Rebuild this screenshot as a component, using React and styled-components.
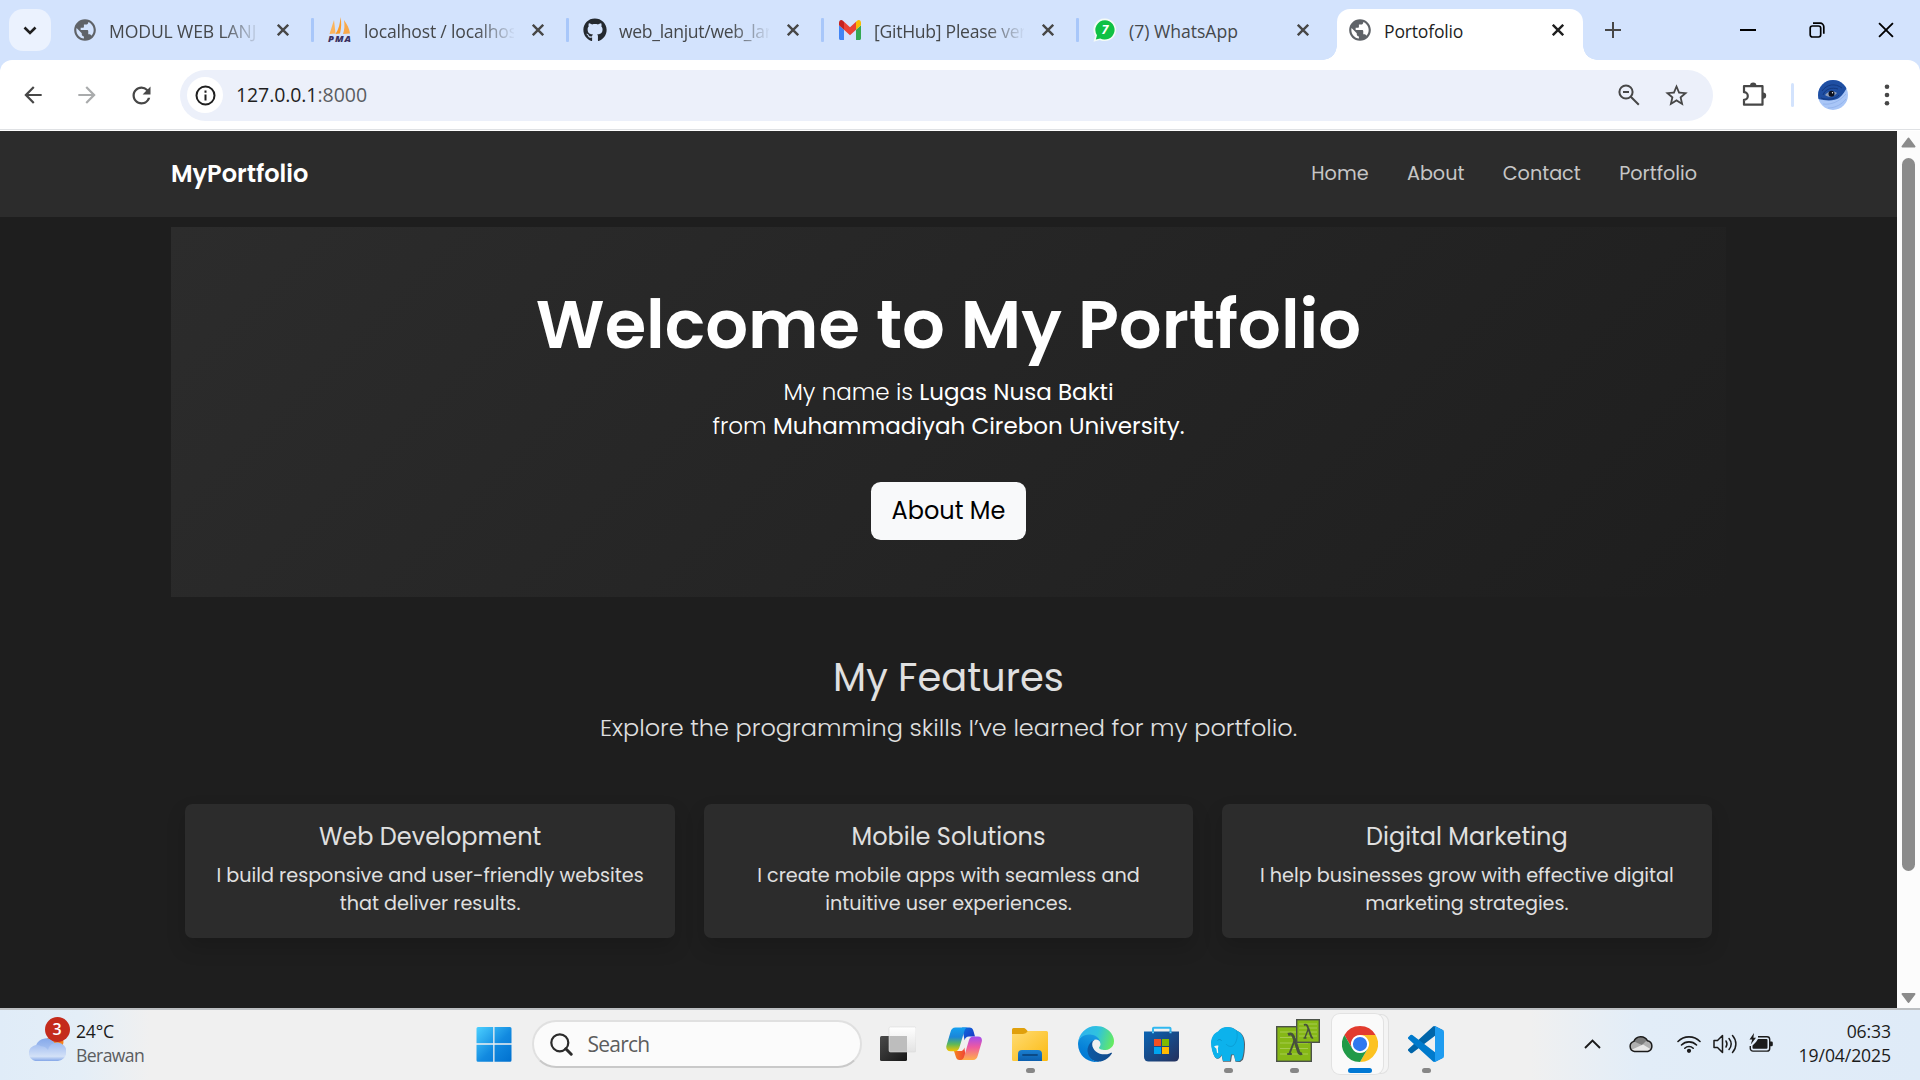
import React from "react";
import styled, { createGlobalStyle, css } from "styled-components";
import { MdPublic, MdArrowBack, MdArrowForward, MdRefresh, MdStarBorder } from "react-icons/md";
import { FaGithub } from "react-icons/fa";

const geometric = `Poppins, Inter, "Open Sans", sans-serif`;
const system = `"Segoe UI", "Open Sans", "Noto Sans", sans-serif`;

const GlobalStyle = createGlobalStyle`
  *, *::before, *::after { box-sizing: border-box; }
  html, body { margin: 0; padding: 0; }
  body { width: 1920px; height: 1080px; overflow: hidden; background: #fff; font-family: ${system}; }
  #root { height: 1080px; }
  svg { display: block; flex: none; }
  h1, h2, h3, p { margin: 0; font-weight: inherit; }
`;

const Screen = styled.div`
  display: flex;
  flex-direction: column;
  width: 1920px;
  height: 1080px;
`;

/* ---------- Tab strip ---------- */

const TabStrip = styled.div`
  display: flex;
  height: 60px;
  background: #d3e3fd;
  flex: none;
`;

const TabSearch = styled.div`
  display: flex;
  align-items: center;
  justify-content: center;
  width: 42px;
  height: 42px;
  margin: 9px 8px 0 9px;
  border-radius: 14px;
  background: #ebf2fe;
`;

const Tab = styled.div`
  display: flex;
  align-items: center;
  width: 255px;
  height: 60px;
  padding: 0 0 0 15px;
  flex: none;
  color: #45484b;

  ${(p) =>
    p.$active &&
    css`
      position: relative;
      width: 246px;
      height: 51px;
      margin: 9px 0 0 3px;
      padding: 0 0 9px 12px;
      border-radius: 13px 13px 0 0;
      background: #fff;
      color: #1f1f1f;

      &::before,
      &::after {
        content: "";
        position: absolute;
        bottom: 0;
        width: 14px;
        height: 14px;
      }
      &::before {
        left: -14px;
        background: radial-gradient(circle at 0 0, transparent 13.5px, #fff 14px);
      }
      &::after {
        right: -14px;
        background: radial-gradient(circle at 100% 0, transparent 13.5px, #fff 14px);
      }
    `}
`;

const Favicon = styled.div`
  display: flex;
  align-items: center;
  justify-content: center;
  width: 24px;
  height: 24px;
  margin-left: -1px;
`;

const TabTitle = styled.div`
  width: 150px;
  margin: 2px 0 0 12px;
  white-space: nowrap;
  font-size: 17.6px;
  line-height: 24px;
  letter-spacing: ${(p) => p.$track}px;
  ${(p) => p.$fade && css`mask-image: linear-gradient(90deg, #000 112px, transparent 152px);`}
`;

const TabClose = styled.div`
  display: flex;
  margin-left: 18px;
`;

const TabDivider = styled.div`
  width: 3px;
  height: 24px;
  margin-left: auto;
  background: #a8c7fa;
  border-radius: 1px;
`;

const NewTab = styled.div`
  display: flex;
  align-items: center;
  justify-content: center;
  width: 60px;
`;

const WindowControls = styled.div`
  display: flex;
  margin-left: auto;
`;

const WindowButton = styled.div`
  display: flex;
  align-items: center;
  justify-content: center;
  width: 69px;
  height: 59px;
`;

/* ---------- Toolbar ---------- */

const ToolbarBack = styled.div`
  background: #d3e3fd;
  flex: none;
`;

const Toolbar = styled.div`
  display: flex;
  align-items: center;
  height: 70px;
  padding: 1px 0 0 6px;
  background: #fff;
  border-bottom: 1px solid #dfe1e4;
  border-radius: 12px 12px 0 0;
`;

const ToolbarEdge = styled.div`
  height: 1px;
  background: #fff;
`;

const NavButton = styled.div`
  display: flex;
  align-items: center;
  justify-content: center;
  width: 54px;
  color: ${(p) => (p.$off ? "#a9abac" : "#474747")};
`;

const AddressBar = styled.div`
  display: flex;
  align-items: center;
  width: 1533px;
  height: 51px;
  margin-left: 12px;
  padding: 0 23px 0 7px;
  border-radius: 26px;
  background: #ecf0fa;
`;

const SiteInfo = styled.div`
  display: flex;
  align-items: center;
  justify-content: center;
  width: 36px;
  height: 36px;
  border-radius: 50%;
  background: #fff;
`;

const Url = styled.div`
  margin-left: 13px;
  font-size: 19.5px;
  line-height: 30px;
  letter-spacing: -0.1px;
  color: #1f1f1f;
  white-space: nowrap;
`;

const Port = styled.span`
  color: #5a5d61;
  letter-spacing: 0;
`;

const AddressActions = styled.div`
  display: flex;
  align-items: center;
  gap: 23px;
  margin-left: auto;
  color: #474747;
`;

const Extensions = styled.div`
  display: flex;
  justify-content: center;
  width: 74px;
  margin-left: 4px;
`;

const ToolbarDivider = styled.div`
  width: 3px;
  height: 24px;
  border-radius: 2px;
  background: #d3e3fd;
`;

const Profile = styled.div`
  margin-left: 24px;
`;

const MenuDots = styled.div`
  margin-left: 36px;
`;

/* ---------- Page ---------- */

const Viewport = styled.div`
  display: flex;
  height: 877px;
  flex: none;
`;

const Page = styled.div`
  width: 1897px;
  background: #1e1e1e;
  font-family: ${geometric};
  color: #e0e0e0;
`;

const Navbar = styled.div`
  display: flex;
  align-items: center;
  justify-content: space-between;
  height: 86.4px;
  padding: 0 200px 1px 171px;
  background: #2c2c2c;
`;

const Brand = styled.div`
  font-size: 24px;
  font-weight: 600;
  line-height: 36px;
  color: #fff;
`;

const Menu = styled.div`
  display: flex;
  gap: 38.4px;
  margin-top: 2px;
  font-size: 19.2px;
  line-height: 28.8px;
  color: #c6c6c6;
`;

const Hero = styled.section`
  display: flex;
  flex-direction: column;
  align-items: center;
  width: 1555.2px;
  height: 370.5px;
  margin: 9.6px 0 0 170.9px;
  padding-top: 57.6px;
  background: linear-gradient(135deg, #2c2c2c, #1e1e1e);
  color: #fff;
`;

const HeroTitle = styled.h1`
  font-size: 67.2px;
  line-height: 80.64px;
  font-weight: 600;
`;

const HeroText = styled.p`
  margin-top: 9.6px;
  font-size: 23.04px;
  line-height: 34.56px;
  font-weight: 300;
  text-align: center;
`;

const Strong = styled.span`
  font-weight: 400;
`;

const AboutButton = styled.div`
  display: flex;
  align-items: center;
  justify-content: center;
  width: 155px;
  height: 57.6px;
  margin-top: 38.4px;
  border-radius: 9.6px;
  background: #f8f9fa;
  color: #000;
  font-size: 24px;
  line-height: 36px;
`;

const Features = styled.section`
  display: flex;
  flex-direction: column;
  align-items: center;
  width: 1555.2px;
  margin-left: 170.9px;
  padding: 57.6px 14.4px 0;
`;

const FeaturesTitle = styled.h2`
  font-size: 38.4px;
  line-height: 46.08px;
`;

const Lead = styled.p`
  margin-top: 8.8px;
  font-size: 24px;
  line-height: 36px;
  font-weight: 300;
`;

const CardGrid = styled.div`
  display: grid;
  grid-template-columns: repeat(3, 1fr);
  gap: 28.8px;
  width: 100%;
  margin-top: 57.6px;
`;

const Card = styled.article`
  padding: 19.2px;
  border-radius: 7.2px;
  background: #2c2c2c;
  box-shadow: 0 9.6px 19.2px rgba(0, 0, 0, 0.15);
  text-align: center;
`;

const CardTitle = styled.h3`
  font-size: 24px;
  line-height: 28.8px;
`;

const CardText = styled.p`
  margin-top: 10.4px;
  font-size: 19.2px;
  line-height: 28.3px;
`;

const Scrollbar = styled.div`
  display: flex;
  flex-direction: column;
  align-items: center;
  width: 23px;
  padding: 6px 0 4px;
  background: #fcfcfc;
`;

const Thumb = styled.div`
  width: 13px;
  height: 713px;
  margin-top: 10px;
  margin-bottom: auto;
  border-radius: 7px;
  background: #8b8b8b;
`;

/* ---------- Taskbar ---------- */

const Taskbar = styled.div`
  display: flex;
  height: 72px;
  flex: none;
  border-top: 2px solid #bcbfc2;
  background: linear-gradient(90deg, #e0ecf8 0, #e4eef7 80px, #f0f0f0 150px, #f0f0f0 1530px, #e2edf8 1640px, #dfebf8 1920px);
`;

const Weather = styled.div`
  display: flex;
  width: 461px;
  padding: 9px 0 0 28.5px;
`;

const WeatherIcon = styled.div`
  position: relative;
  width: 38px;
  padding-top: 17px;
`;

const Badge = styled.div`
  position: absolute;
  left: 16px;
  top: -2px;
  width: 25px;
  height: 25px;
  border-radius: 50%;
  background: #c42b1c;
  color: #fff;
  font-size: 16px;
  font-weight: 600;
  line-height: 24px;
  text-align: center;
`;

const WeatherText = styled.div`
  margin-left: 9.5px;
  font-size: 17.6px;
  line-height: 24px;
  letter-spacing: -0.2px;
  color: #1b1b1b;
`;

const Muted = styled.div`
  color: #5b5d60;
  letter-spacing: -0.6px;
`;

const AppCell = styled.div`
  display: flex;
  justify-content: center;
  width: 66px;
`;

const AppTile = styled.div`
  display: flex;
  flex-direction: column;
  align-items: center;
  width: 56px;
  height: 60px;
  margin-top: 4px;
  padding-top: 12px;
  ${(p) =>
    p.$active &&
    css`
      width: 51px;
      margin-left: -6px;
      padding-left: 5px;
      border-radius: 8px;
      background: #fafafa;
      box-shadow: 0 0 0 1px #e2e2e2, 6px 0 0 -1px #f4f4f4, 6px 0 0 0 #e0e0e0;
    `}
`;

const AppIcon = styled.div`
  display: flex;
  align-items: center;
  justify-content: center;
  width: 36px;
  height: 36px;
`;

const Indicator = styled.div`
  width: ${(p) => (p.$active ? 24 : 9)}px;
  height: 5px;
  margin-top: 6px;
  border-radius: 3px;
  background: ${(p) => (p.$active ? "#0078d4" : "#868686")};
`;

const SearchBox = styled.div`
  display: flex;
  align-items: center;
  width: 330px;
  height: 48px;
  margin: 10px 3px 0 5px;
  padding-left: 15.5px;
  border: 2px solid #e0e0e0;
  border-bottom-color: #c9c9c9;
  border-radius: 24px;
  background: #fbfbfb;
  font-size: 21px;
  letter-spacing: -0.75px;
  color: #5d5d5d;
`;

const SearchLabel = styled.div`
  margin-left: 15px;
  line-height: 30px;
`;

const Tray = styled.div`
  display: flex;
  align-items: center;
  height: 67px;
  margin-left: auto;
  padding-right: 29px;
`;

const TrayItem = styled.div`
  margin-left: ${(p) => p.$gap}px;
`;

const Clock = styled.div`
  width: 93px;
  margin: -2px 0 0 25.5px;
  text-align: right;
  font-size: 17.6px;
  line-height: 24px;
  letter-spacing: -0.1px;
  color: #1b1b1b;
`;

/* ---------- Icons ---------- */

const Cross = ({ color = "#474747", size = 12, weight = 2.4 }) => (
  <svg width={size} height={size} viewBox="0 0 12 12" stroke={color} strokeWidth={weight} fill="none">
    <path d="M.8.8l10.4 10.4M11.2.8.8 11.2" />
  </svg>
);

const PmaIcon = () => (
  <svg width="26" height="28" viewBox="0 0 26 28">
    <path d="M7 4 8.500 17.500 2.500 18Z" fill="#fbb45c" />
    <path d="M13.500 1c1 5 1 11-.5 16.500L8.500 18C12 13 13 7 13.500 1Z" fill="#f89c2c" />
    <path d="M17 4c3 4 5.500 9 6 13.500l-7 .5c1.500-4 1.800-9 1-14Z" fill="#f9a94a" />
    <text x="1" y="25.500" fontFamily="Open Sans, sans-serif" fontSize="9.500" fontWeight="800" fontStyle="italic" fill="#3a3160" textLength="23">PMA</text>
  </svg>
);

const GmailIcon = () => (
  <svg width="22" height="20" viewBox="52 42 88 66" preserveAspectRatio="none">
    <path fill="#4285f4" d="M58 108h14V74L52 59v43c0 3.320 2.690 6 6 6" />
    <path fill="#34a853" d="M120 108h14c3.320 0 6-2.690 6-6V59l-20 15" />
    <path fill="#fbbc04" d="M120 48v26l20-15v-8c0-7.420-8.470-11.650-14.400-7.200" />
    <path fill="#ea4335" d="M72 74V48l24 18 24-18v26L96 92" />
    <path fill="#c5221f" d="M52 51v8l20 15V48l-5.600-4.200c-5.940-4.450-14.400-.22-14.400 7.200" />
  </svg>
);

const WhatsAppIcon = () => (
  <svg width="24" height="24" viewBox="0 0 24 24">
    <path d="M12 .5a11.300 11.300 0 1 1-5.200 21.400L.5 23.800l1.700-6A11.300 11.300 0 0 1 12 .5Z" fill="#f4fbf6" />
    <path d="M12 2.200a9.700 9.700 0 1 1-4.800 18.200L2.800 21.400l1.200-4.200A9.700 9.700 0 0 1 12 2.200Z" fill="#0fc144" />
    <text x="12" y="16.400" textAnchor="middle" fontFamily="Open Sans, sans-serif" fontSize="12.500" fontWeight="700" fontStyle="italic" fill="#fff">7</text>
  </svg>
);

const RestoreIcon = () => (
  <svg width="16" height="16" viewBox="0 0 16 16" fill="none" stroke="#000" strokeWidth="1.700">
    <rect x="1.200" y="4" width="10.500" height="11" rx="2.200" />
    <path d="M4 1.200h7.200A3.600 3.600 0 0 1 14.800 4.800v7" />
  </svg>
);

const ZoomOutIcon = () => (
  <svg width="22" height="22" viewBox="0 0 22 22" fill="none" stroke="#474747" strokeWidth="2">
    <circle cx="8" cy="8" r="6.600" />
    <path d="M5 8h6M12.800 12.800l8 8" />
  </svg>
);

const InfoIcon = () => (
  <svg width="21" height="21" viewBox="0 0 21 21" fill="none" stroke="#1f1f1f" strokeWidth="2">
    <circle cx="10.500" cy="10.500" r="9" />
    <path d="M10.500 9.500v6M10.500 5.500v2.200" />
  </svg>
);

const PuzzleIcon = () => (
  <svg width="26" height="26" viewBox="0 0 26 26">
    <path d="M3 4.200h18.500v18.500H3v-4.900a3.600 3.600 0 0 0 0-7.600Z" fill="none" stroke="#474747" strokeWidth="2.200" strokeLinejoin="round" />
    <path d="M9 3.800a3.200 3.200 0 0 1 6.400 0ZM22 10.400a3.200 3.200 0 0 1 0 6.400Z" fill="#474747" />
  </svg>
);

const AvatarIcon = () => (
  <svg width="30" height="30" viewBox="0 0 30 30">
    <defs><clipPath id="avatarClip"><circle cx="15" cy="15" r="15" /></clipPath></defs>
    <g clipPath="url(#avatarClip)">
      <rect width="30" height="30" fill="#a9c6f7" />
      <path d="M0 0h30v6c-3 5-5 9-9 12S8 21 0 19Z" fill="#1f4fa3" />
      <path d="M4 11C9 4 17 3 24 8M5 15c2-6 9-8 15-6M3 18c5 2 14 2 18-3" fill="none" stroke="#143a80" strokeWidth="1" />
      <path d="M5 24c8 1 16-2 23-10M10 28c8 0 14-4 18-9" fill="none" stroke="#8fb0ea" strokeWidth=".8" />
      <path d="M7 15c3-4 8-5 12-2-3 4-8 5-12 2Z" fill="#8fa0bd" />
      <circle cx="13.500" cy="13.800" r="3" fill="#0a1020" />
      <circle cx="14.500" cy="12.800" r=".7" fill="#fff" />
    </g>
  </svg>
);

const CloudSunIcon = () => (
  <svg width="37" height="26" viewBox="0 0 37 26">
    <defs>
      <linearGradient id="cloudA" x1="0" y1="0" x2="0" y2="1"><stop offset="0" stopColor="#86a9ea" /><stop offset="1" stopColor="#c3d6f6" /></linearGradient>
      <linearGradient id="cloudB" x1="0" y1="0" x2="0" y2="1"><stop offset="0" stopColor="#9dbaf0" /><stop offset=".75" stopColor="#d3e1f7" /><stop offset="1" stopColor="#83a6e8" /></linearGradient>
    </defs>
    <circle cx="26" cy="6" r="8.500" fill="#f7821b" />
    <path d="M8 24a7.500 7.500 0 0 1-1-14.500A10.500 10.500 0 0 1 26 7.500V24Z" fill="url(#cloudA)" />
    <path d="M8.500 25A8 8 0 1 1 12 10.200 8 8 0 0 1 19 14a9.300 9.300 0 1 1 10 11Z" fill="url(#cloudB)" />
  </svg>
);

const StartIcon = () => (
  <svg width="36" height="36" viewBox="0 0 36 36">
    <defs><linearGradient id="start" x1="0" y1="0" x2="1" y2="1"><stop offset="0" stopColor="#4cd0ff" /><stop offset=".55" stopColor="#128ae0" /><stop offset="1" stopColor="#0070cf" /></linearGradient></defs>
    <path d="M2 1h15.200v16.200H.5V2.500A1.500 1.500 0 0 1 2 1ZM18.500 1H34a1.500 1.500 0 0 1 1.500 1.500v14.700h-17ZM.5 18.700h16.700v17H2a1.500 1.500 0 0 1-1.500-1.500ZM18.500 18.700h17v15.500a1.500 1.500 0 0 1-1.500 1.500H18.500Z" fill="url(#start)" />
  </svg>
);

const SearchIcon = () => (
  <svg width="23" height="23" viewBox="0 0 23 23" fill="none" stroke="#2b2b2b">
    <circle cx="9.800" cy="9.800" r="8.500" strokeWidth="2.200" />
    <path d="M15.800 15.800l5.400 5.400" strokeWidth="3" strokeLinecap="round" />
  </svg>
);

const TaskViewIcon = () => (
  <svg width="36" height="36" viewBox="0 0 36 36">
    <defs>
      <linearGradient id="tvA" x1="0" y1="0" x2="1" y2="1"><stop offset="0" stopColor="#4a4a4a" /><stop offset="1" stopColor="#161616" /></linearGradient>
      <linearGradient id="tvB" x1="0" y1="0" x2="0" y2="1"><stop offset="0" stopColor="#fff" /><stop offset="1" stopColor="#e3e3e3" /></linearGradient>
    </defs>
    <rect x="0" y="10" width="27" height="25" rx="1.500" fill="url(#tvA)" />
    <rect x="9" y="1" width="27" height="25" rx="1.500" fill="url(#tvB)" stroke="#dadada" strokeWidth=".6" />
    <path d="M9.300 10H27v15.700H10.500a1.200 1.200 0 0 1-1.200-1.200Z" fill="#bdbdbd" />
  </svg>
);

const CopilotIcon = () => (
  <svg width="36" height="36" viewBox="0 0 36 36">
    <defs>
      <linearGradient id="cpA" x1="0" y1="0" x2="0" y2="1"><stop offset="0" stopColor="#14a0f0" /><stop offset=".4" stopColor="#1b86d8" /><stop offset=".7" stopColor="#5cb85a" /><stop offset="1" stopColor="#f5c400" /></linearGradient>
      <linearGradient id="cpB" x1="0" y1="0" x2="0" y2="1"><stop offset="0" stopColor="#a24cf0" /><stop offset=".45" stopColor="#ee5aa0" /><stop offset="1" stopColor="#ffb04a" /></linearGradient>
      <linearGradient id="cpC" x1="0" y1="0" x2="1" y2="1"><stop offset="0" stopColor="#0d6fe0" /><stop offset="1" stopColor="#1a2fc0" /></linearGradient>
      <linearGradient id="cpD" x1="0" y1="0" x2="1" y2="0"><stop offset="0" stopColor="#f58220" /><stop offset="1" stopColor="#ef4136" /></linearGradient>
    </defs>
    <path d="M16 1.500h7.500c2 0 3.200 1.200 3.800 3L29 10.500h-6c-2.500 0-3.600 1.200-4.400 3.800Z" fill="url(#cpC)" />
    <path d="M20 34h-6.500c-2 0-3-1.200-3.600-3L8 25h6c2.500 0 3.600-1 4.400-3.600Z" fill="url(#cpD)" />
    <path d="M9.500 1.500H22c-2 0-3 1.500-3.600 3.500l-5 16.500c-.8 2.400-2 3.700-4.400 3.700H4.500C1 25.200-.3 22.500.5 19.500L4.500 6c.8-2.800 2.200-4.500 5-4.500Z" fill="url(#cpA)" />
    <path d="M27 34H14.500c2 0 3-1.500 3.600-3.500L23 14c.8-2.400 2-3.600 4.400-3.600H32c3.400 0 4.500 2.600 3.700 5.600L31.800 29.500C31 32.300 29.800 34 27 34Z" fill="url(#cpB)" />
  </svg>
);

const FolderIcon = () => (
  <svg width="36" height="36" viewBox="0 0 36 36">
    <defs>
      <linearGradient id="fdA" x1="0" y1="0" x2="1" y2="1"><stop offset="0" stopColor="#ffdc73" /><stop offset="1" stopColor="#fbb911" /></linearGradient>
      <linearGradient id="fdB" x1="0" y1="0" x2="0" y2="1"><stop offset="0" stopColor="#1a7fd0" /><stop offset="1" stopColor="#0c5fae" /></linearGradient>
    </defs>
    <path d="M0 3.500A1.500 1.500 0 0 1 1.500 2h9.700c1.200 0 2 .4 2.800 1.200L16 5.500V9H0Z" fill="#e0a00c" />
    <path d="M0 8h11c1.500 0 2.500-.4 3.500-1.400L16 5h18.500A1.500 1.500 0 0 1 36 6.500v27a1.500 1.500 0 0 1-1.500 1.500h-33A1.500 1.500 0 0 1 0 33.500Z" fill="url(#fdA)" />
    <path d="M6 35v-7a4 4 0 0 1 4-4h16a4 4 0 0 1 4 4v7Z" fill="url(#fdB)" />
    <path d="M11 29h14" stroke="#0b4a86" strokeWidth="1.800" strokeLinecap="round" />
  </svg>
);

const EdgeIcon = () => (
  <svg width="36" height="36" viewBox="0 0 256 256">
    <defs>
      <linearGradient id="egA" x1="0" y1=".5" x2="1" y2=".5"><stop offset="0" stopColor="#0c59a4" /><stop offset="1" stopColor="#114a8b" /></linearGradient>
      <linearGradient id="egB" x1=".6" y1="0" x2=".3" y2="1"><stop offset="0" stopColor="#1b9de2" /><stop offset=".6" stopColor="#0680d7" /><stop offset="1" stopColor="#0078d4" /></linearGradient>
      <linearGradient id="egC" x1="0" y1=".4" x2="1" y2=".6"><stop offset="0" stopColor="#2fb2ee" /><stop offset=".5" stopColor="#2fc2df" /><stop offset="1" stopColor="#66eb5e" /></linearGradient>
    </defs>
    <path fill="url(#egA)" d="M235.680 190.280a93.730 93.730 0 0 1-10.540 4.710 101.870 101.870 0 0 1-35.900 6.460c-47.320 0-88.540-32.550-88.540-74.320a31.480 31.480 0 0 1 16.430-27.310c-42.800 1.800-53.800 46.400-53.800 72.530 0 73.880 68.090 81.370 82.760 81.370 7.910 0 19.840-2.300 27-4.560l1.310-.44a128.340 128.340 0 0 0 66.600-52.800 4 4 0 0 0-5.320-5.640Z" />
    <path fill="url(#egB)" d="M105.730 241.420a79.200 79.200 0 0 1-22.740-21.340 80.720 80.720 0 0 1 29.530-120c3.120-1.470 8.450-4.130 15.540-4a32.350 32.350 0 0 1 25.690 13 31.880 31.880 0 0 1 6.360 18.660c0-.21 24.460-79.600-80-79.600-43.900 0-80 41.660-80 78.210a130.150 130.150 0 0 0 12.110 56 128 128 0 0 0 156.380 67.110 75.550 75.550 0 0 1-62.780-8Z" />
    <path fill="url(#egC)" d="M152.330 148.860c-.81 1.050-3.300 2.500-3.300 5.660 0 2.610 1.700 5.120 4.720 7.230 14.380 10 41.490 8.680 41.560 8.680a59.560 59.560 0 0 0 30.270-8.350A61.380 61.380 0 0 0 256 109.230c.26-22.410-8-37.310-11.340-43.910C223.460 23.840 177.720 0 128 0A128 128 0 0 0 0 126.200c.48-36.540 36.800-66.050 80-66.050 3.500 0 23.460.34 42 10.070 16.340 8.580 24.900 18.940 30.850 29.210 6.180 10.670 7.280 24.150 7.280 29.520 0 5.370-2.740 13.330-7.800 19.910Z" />
  </svg>
);

const StoreIcon = () => (
  <svg width="36" height="36" viewBox="0 0 36 36">
    <defs><linearGradient id="stA" x1="0" y1="0" x2="1" y2="1"><stop offset="0" stopColor="#0a64b4" /><stop offset="1" stopColor="#25305c" /></linearGradient></defs>
    <path d="M9 7V2.500A.8.8 0 0 1 9.800 1.700h15.900a.8.8 0 0 1 .8.800V7" fill="none" stroke="#31b8f0" strokeWidth="2" />
    <path d="M0 5.500h35V31a4.500 4.500 0 0 1-4.500 4.500h-26A4.500 4.500 0 0 1 0 31Z" fill="url(#stA)" />
    <path d="M9 5.500v1.700M26.500 5.500v1.700" stroke="#5fd0fa" strokeWidth="2" />
    <path fill="#f25022" d="M10 13h7v7h-7z" />
    <path fill="#7fba00" d="M18 13h7v7h-7z" />
    <path fill="#00a4ef" d="M10 21h7v7h-7z" />
    <path fill="#ffb900" d="M18 21h7v7h-7z" />
  </svg>
);

const ElephantIcon = () => (
  <svg width="36" height="36" viewBox="0 0 36 36">
    <path d="M8 5.500C12 0 21-.5 26.500 4.500 32 6.500 34.500 12 34.500 18c0 6-.5 11-2 15.500L29.500 36 25 35.500 23.500 29h-2L20.500 35.500h-8L11 29c-1 4-5 5-7 1C2.500 27 1 22 1 16.500 1.200 11.500 4 7 8 5.500Z" fill="#55606a" transform="translate(.5 .2)" />
    <path d="M8 5.500C12 0 21-.5 26.500 4.500 32 6.500 34 12 34 18c0 6-.5 10.500-2 15L29.500 35.200H25.500L24 28.500H21L20 35h-7L11.500 28.500C10 33 6 34 4.200 30 2.800 27 1 22 1 16.500 1.200 11.500 4 7 8 5.500Z" fill="#0cb2ec" />
    <path d="M26.500 4.500c1.500 5 .5 11-2.500 14.500-2.500 2.500-6 1.500-8-1" fill="none" stroke="#0aa0d8" strokeWidth="1" />
    <path d="M7.500 14.500c1.200-1.300 3.200-1.300 4 .2" fill="none" stroke="#0791c6" strokeWidth="1" />
    <path d="M4 20.500c1.500-1 3-1.200 4.500-.8l-.6 2.500.3 5-1.200-.4-.6-4Z" fill="#f6f6f2" />
  </svg>
);

const LambdaIcon = () => (
  <svg width="52" height="50" viewBox="-8 0 52 50">
    <rect x=".7" y="7.700" width="34.600" height="34.600" fill="#86b817" stroke="#4b5248" strokeWidth="1.400" />
    <path d="M4 13h28M4 18.500h28M4 24h28M4 29.500h28M4 35h28" stroke="#a6cb50" strokeWidth="1.200" />
    <path d="M12 15.500c3.500-1.500 4.800 0 6 3.500l4.500 13.500c.7 2 1.800 2.800 3.500 1.800" fill="none" stroke="#46503c" strokeWidth="3" />
    <path d="M18.500 21.500 13.500 34.500M11.200 35h4.600" fill="none" stroke="#46503c" strokeWidth="2" />
    <rect x="20.700" y=".7" width="22.600" height="22.600" fill="#86b817" stroke="#4b5248" strokeWidth="1.400" />
    <path d="M23 5h18M23 9h18M23 13h18M23 17h18" stroke="#a6cb50" strokeWidth="1" />
    <path d="M28 6c2.500-1 3.200 0 4 2.500l3 8.500c.5 1.500 1 2 2 1.500" fill="none" stroke="#46503c" strokeWidth="2" />
    <path d="M32.300 10 29 18.500M27.500 19h3" fill="none" stroke="#46503c" strokeWidth="1.400" />
  </svg>
);

const ChromeIcon = () => (
  <svg width="36" height="36" viewBox="0 0 48 48">
    <circle cx="24" cy="24" r="12" fill="#fff" />
    <path fill="#e23b2e" d="M24 12h20.780A23.994 23.994 0 0 0 3.216 12.003l10.392 18 .01-.003A11.985 11.985 0 0 1 24 12Z" />
    <path fill="#fcc221" d="M34.391 30.003 24 48a23.994 23.994 0 0 0 20.780-35.997H24v.01a11.985 11.985 0 0 1 10.391 17.990Z" />
    <path fill="#219a48" d="M13.609 30.003 3.218 12.006A23.994 23.994 0 0 0 24.003 48l10.390-17.997-.007-.007a11.985 11.985 0 0 1-20.777.007Z" />
    <circle cx="24" cy="24" r="9.500" fill="#2f78ee" />
  </svg>
);

const CodeIcon = () => (
  <svg width="36" height="36" viewBox="0 0 100 100">
    <path fill="#0065a9" d="M96.461 10.796 75.857.876A6.230 6.230 0 0 0 68.750 2.083L1.299 63.583a4.170 4.170 0 0 0 .004 6.162l5.510 5.009a4.170 4.170 0 0 0 5.321.236L93.361 13.370C96.086 11.303 100 13.246 100 16.667v-.24a6.250 6.250 0 0 0-3.539-5.631Z" />
    <path fill="#007acc" d="m96.461 89.204-20.604 9.920a6.230 6.230 0 0 1-7.107-1.207l-67.451-61.500a4.170 4.170 0 0 1 .004-6.162l5.510-5.009a4.170 4.170 0 0 1 5.321-.236l81.227 61.620c2.725 2.067 6.639.124 6.639-3.297v.24a6.250 6.250 0 0 1-3.539 5.631Z" />
    <path fill="#1f9cf0" d="M75.858 99.126a6.230 6.230 0 0 1-7.108-1.210C71.056 100.223 75 98.590 75 95.328V4.672C75 1.410 71.056-.223 68.750 2.083A6.230 6.230 0 0 1 75.858.874l20.600 9.907A6.250 6.250 0 0 1 100 16.413v67.174a6.250 6.250 0 0 1-3.541 5.633Z" />
  </svg>
);

const OneDriveIcon = () => (
  <svg width="26" height="18" viewBox="0 0 26 18">
    <path d="M6.500 16.500A5.200 5.200 0 0 1 5.800 6.400 7.500 7.500 0 0 1 19.500 5.800a5.500 5.500 0 0 1 .3 10.700Z" fill="#b0b0b0" />
    <path d="M6 6.500A7.500 7.500 0 0 1 19 5l-5 5Z" fill="#7c7c7c" />
    <path d="M3 15 15 9.500l9 5.500-3.500 1.500h-14Z" fill="#e8e8e8" />
    <path d="M6.500 16.500A5.200 5.200 0 0 1 5.800 6.400 7.500 7.500 0 0 1 19.500 5.800a5.500 5.500 0 0 1 .3 10.700Z" fill="none" stroke="#1b1b1b" strokeWidth="1.500" />
  </svg>
);

const WifiIcon = () => (
  <svg width="24" height="18" viewBox="0 0 24 18" fill="none" stroke="#1b1b1b" strokeWidth="1.600" strokeLinecap="round">
    <path d="M1 6.500a15.500 15.500 0 0 1 22 0M4.500 10a10.600 10.600 0 0 1 15 0M7.800 13.200a6 6 0 0 1 8.400 0" />
    <circle cx="12" cy="15.800" r="1.300" fill="#1b1b1b" />
  </svg>
);

const VolumeIcon = () => (
  <svg width="24" height="20" viewBox="0 0 24 20" fill="none" stroke="#1b1b1b" strokeWidth="1.500" strokeLinecap="round" strokeLinejoin="round">
    <path d="M1 6.500h3.500l5-5v17l-5-5H1Z" />
    <path d="M13 7c1.300 2 1.300 4 0 6M16 4.500c2.800 3.500 2.800 7.500 0 11M19.500 1.500c4.500 5 4.500 12 0 17" />
  </svg>
);

const BatteryIcon = () => (
  <svg width="24" height="21" viewBox="0 -1 24 21">
    <path d="M9 2.700h9a2.700 2.700 0 0 1 2.700 2.700v9A2.700 2.700 0 0 1 18 17.100H4a2.700 2.700 0 0 1-2.700-2.700V12" fill="none" stroke="#1b1b1b" strokeWidth="1.400" />
    <path d="M9 4.900h8.500a1 1 0 0 1 1 1v7.800a1 1 0 0 1-1 1h-13a1 1 0 0 1-1-1V11.600L7 8Z" fill="#1b1b1b" />
    <path d="M21 7.500h1.500a1.300 1.300 0 0 1 1.300 1.300V11a1.300 1.300 0 0 1-1.300 1.300H21Z" fill="#1b1b1b" />
    <path d="M5-1 .5 5.500h2.700L1.800 10.500 7 3.800H4.400Z" fill="#1b1b1b" />
  </svg>
);

const tabs = [
  { icon: <MdPublic size={26} color="#5f6368" />, title: "MODUL WEB LANJ", track: -0.13, fade: true },
  { icon: <PmaIcon />, title: "localhost / localhos", track: -0.19, fade: true },
  { icon: <FaGithub size={24} color="#24292f" />, title: "web_lanjut/web_lar", track: -0.32, fade: true },
  { icon: <GmailIcon />, title: "[GitHub] Please ver", track: -0.28, fade: true },
  { icon: <WhatsAppIcon />, title: "(7) WhatsApp", track: -0.02 },
  { icon: <MdPublic size={26} color="#5f6368" />, title: "Portofolio", track: -0.2, active: true },
];

const cards = [
  { title: "Web Development", lines: ["I build responsive and user-friendly websites", "that deliver results."] },
  { title: "Mobile Solutions", lines: ["I create mobile apps with seamless and", "intuitive user experiences."] },
  { title: "Digital Marketing", lines: ["I help businesses grow with effective digital", "marketing strategies."] },
];

const apps = [
  { icon: <TaskViewIcon /> },
  { icon: <CopilotIcon /> },
  { icon: <FolderIcon />, open: true },
  { icon: <EdgeIcon /> },
  { icon: <StoreIcon /> },
  { icon: <ElephantIcon />, open: true },
  { icon: <LambdaIcon />, open: true },
  { icon: <ChromeIcon />, open: true, active: true },
  { icon: <CodeIcon />, open: true },
];

export default function App() {
  return (
    <Screen>
      <GlobalStyle />
      <TabStrip>
        <TabSearch>
          <svg width="14" height="9" viewBox="0 0 14 9" fill="none" stroke="#1f1f1f" strokeWidth="2.600"><path d="M1.500 1.500 7 7l5.500-5.500" /></svg>
        </TabSearch>
        {tabs.map((tab, i) => (
          <Tab key={tab.title} $active={tab.active}>
            <Favicon>{tab.icon}</Favicon>
            <TabTitle $fade={tab.fade} $track={tab.track}>{tab.title}</TabTitle>
            <TabClose><Cross color={tab.active ? "#1f1f1f" : "#474747"} /></TabClose>
            {i < 4 && <TabDivider />}
          </Tab>
        ))}
        <NewTab>
          <svg width="16" height="16" viewBox="0 0 16 16" stroke="#474747" strokeWidth="2"><path d="M8 0v16M0 8h16" /></svg>
        </NewTab>
        <WindowControls>
          <WindowButton><svg width="16" height="2" viewBox="0 0 16 2"><path d="M0 0h16v2H0z" /></svg></WindowButton>
          <WindowButton><RestoreIcon /></WindowButton>
          <WindowButton><Cross color="#000" size={16} weight={1.4} /></WindowButton>
        </WindowControls>
      </TabStrip>

      <ToolbarBack>
        <Toolbar>
          <NavButton><MdArrowBack size={26} /></NavButton>
          <NavButton $off><MdArrowForward size={26} /></NavButton>
          <NavButton><MdRefresh size={27} /></NavButton>
          <AddressBar>
            <SiteInfo><InfoIcon /></SiteInfo>
            <Url>127.0.0.1<Port>:8000</Port></Url>
            <AddressActions><ZoomOutIcon /><MdStarBorder size={27} /></AddressActions>
          </AddressBar>
          <Extensions><PuzzleIcon /></Extensions>
          <ToolbarDivider />
          <Profile><AvatarIcon /></Profile>
          <MenuDots>
            <svg width="6" height="22" viewBox="0 0 6 22" fill="#474747"><circle cx="3" cy="2.700" r="2.300" /><circle cx="3" cy="11" r="2.300" /><circle cx="3" cy="19.300" r="2.300" /></svg>
          </MenuDots>
        </Toolbar>
        <ToolbarEdge />
      </ToolbarBack>

      <Viewport>
        <Page>
          <Navbar>
            <Brand>MyPortfolio</Brand>
            <Menu>
              <span>Home</span>
              <span>About</span>
              <span>Contact</span>
              <span>Portfolio</span>
            </Menu>
          </Navbar>
          <Hero>
            <HeroTitle>Welcome to My Portfolio</HeroTitle>
            <HeroText>
              My name is <Strong>Lugas Nusa Bakti</Strong>
              <br />
              from <Strong>Muhammadiyah Cirebon University.</Strong>
            </HeroText>
            <AboutButton>About Me</AboutButton>
          </Hero>
          <Features>
            <FeaturesTitle>My Features</FeaturesTitle>
            <Lead>Explore the programming skills I’ve learned for my portfolio.</Lead>
            <CardGrid>
              {cards.map((card) => (
                <Card key={card.title}>
                  <CardTitle>{card.title}</CardTitle>
                  <CardText>
                    {card.lines[0]}
                    <br />
                    {card.lines[1]}
                  </CardText>
                </Card>
              ))}
            </CardGrid>
          </Features>
        </Page>
        <Scrollbar>
          <svg width="15" height="11" viewBox="0 0 15 11"><path d="M7.500 1.500 13.500 9.500h-12Z" fill="#8b8b8b" stroke="#8b8b8b" strokeWidth="2" strokeLinejoin="round" /></svg>
          <Thumb />
          <svg width="15" height="12" viewBox="0 0 15 12"><path d="M7.500 10 13.500 2h-12Z" fill="#8b8b8b" stroke="#8b8b8b" strokeWidth="2" strokeLinejoin="round" /></svg>
        </Scrollbar>
      </Viewport>

      <Taskbar>
        <Weather>
          <WeatherIcon><CloudSunIcon /><Badge>3</Badge></WeatherIcon>
          <WeatherText>24°C<Muted>Berawan</Muted></WeatherText>
        </Weather>
        <AppCell><AppTile><AppIcon><StartIcon /></AppIcon></AppTile></AppCell>
        <SearchBox><SearchIcon /><SearchLabel>Search</SearchLabel></SearchBox>
        {apps.map((app, i) => (
          <AppCell key={i}>
            <AppTile $active={app.active}>
              <AppIcon>{app.icon}</AppIcon>
              {app.open && <Indicator $active={app.active} />}
            </AppTile>
          </AppCell>
        ))}
        <Tray>
          <svg width="17" height="10" viewBox="0 0 17 10" fill="none" stroke="#1b1b1b" strokeWidth="1.900"><path d="M1 9l7.500-7.500L16 9" /></svg>
          <TrayItem $gap={27}><OneDriveIcon /></TrayItem>
          <TrayItem $gap={23}><WifiIcon /></TrayItem>
          <TrayItem $gap={12}><VolumeIcon /></TrayItem>
          <TrayItem $gap={12}><BatteryIcon /></TrayItem>
          <Clock>06:33<br />19/04/2025</Clock>
        </Tray>
      </Taskbar>
    </Screen>
  );
}
